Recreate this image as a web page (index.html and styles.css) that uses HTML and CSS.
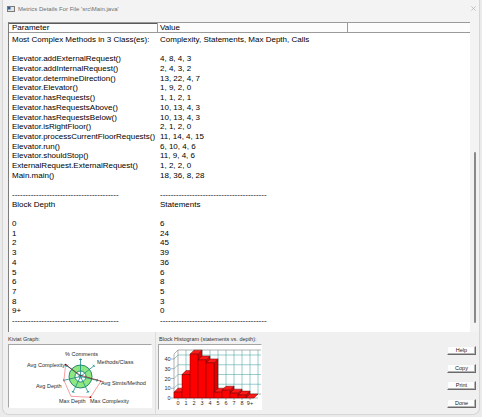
FILE: index.html
```html
<!DOCTYPE html>
<html>
<head>
<meta charset="utf-8">
<title>Metrics Details</title>
<link rel="stylesheet" href="styles.css">
</head>
<body>
<div class="window">
  <div class="titlebar">
    <svg class="app-icon" width="8" height="6" viewBox="0 0 8 6"><rect x="0.5" y="0.5" width="7" height="5" fill="#e4e4e4" stroke="#7a7a7a"/><rect x="1" y="1" width="2.5" height="2.5" fill="#2f5f9a"/></svg>
    <span class="title">Metrics Details For File 'src\Main.java'</span>
    <svg class="close" width="5" height="5" viewBox="0 0 5 5"><path d="M0.3 0.3 L4.7 4.7 M4.7 0.3 L0.3 4.7" stroke="#a8a8a8" stroke-width="0.6"/></svg>
  </div>
  <div class="list">
    <div class="table">
      <div class="thead">
        <div class="th c1">Parameter</div>
        <div class="th c2">Value</div>
        <div class="th c3"></div>
      </div>
      <div class="rows">
        <div class="row"><span>Most Complex Methods in 3 Class(es):</span><span>Complexity, Statements, Max Depth, Calls</span></div>
        <div class="row"></div>
        <div class="row"><span>Elevator.addExternalRequest()</span><span>4, 8, 4, 3</span></div>
        <div class="row"><span>Elevator.addInternalRequest()</span><span>2, 4, 3, 2</span></div>
        <div class="row"><span>Elevator.determineDirection()</span><span>13, 22, 4, 7</span></div>
        <div class="row"><span>Elevator.Elevator()</span><span>1, 9, 2, 0</span></div>
        <div class="row"><span>Elevator.hasRequests()</span><span>1, 1, 2, 1</span></div>
        <div class="row"><span>Elevator.hasRequestsAbove()</span><span>10, 13, 4, 3</span></div>
        <div class="row"><span>Elevator.hasRequestsBelow()</span><span>10, 13, 4, 3</span></div>
        <div class="row"><span>Elevator.isRightFloor()</span><span>2, 1, 2, 0</span></div>
        <div class="row"><span>Elevator.processCurrentFloorRequests()</span><span>11, 14, 4, 15</span></div>
        <div class="row"><span>Elevator.run()</span><span>6, 10, 4, 6</span></div>
        <div class="row"><span>Elevator.shouldStop()</span><span>11, 9, 4, 6</span></div>
        <div class="row"><span>ExternalRequest.ExternalRequest()</span><span>1, 2, 2, 0</span></div>
        <div class="row"><span>Main.main()</span><span>18, 36, 8, 28</span></div>
        <div class="row"></div>
        <div class="row"><span>----------------------------------------</span><span>----------------------------------------</span></div>
        <div class="row"><span>Block Depth</span><span>Statements</span></div>
        <div class="row"></div>
        <div class="row"><span>0</span><span>6</span></div>
        <div class="row"><span>1</span><span>24</span></div>
        <div class="row"><span>2</span><span>45</span></div>
        <div class="row"><span>3</span><span>39</span></div>
        <div class="row"><span>4</span><span>36</span></div>
        <div class="row"><span>5</span><span>6</span></div>
        <div class="row"><span>6</span><span>8</span></div>
        <div class="row"><span>7</span><span>5</span></div>
        <div class="row"><span>8</span><span>3</span></div>
        <div class="row"><span>9+</span><span>0</span></div>
        <div class="row"><span>----------------------------------------</span><span>----------------------------------------</span></div>
      </div>
    </div>
    <div class="vscroll"><div class="thumb"></div></div>
  </div>
  <div class="bottom">
    <div class="panel kiviat">
      <div class="cap">Kiviat Graph:</div>
      <div class="graph-box kiviat-box">
        <svg width="142" height="62" viewBox="1 1 142 62">
          <circle cx="72.5" cy="32.5" r="11.5" fill="#8ee882" stroke="#0b6a6a" stroke-width="0.8"/>
          <circle cx="72.5" cy="32.5" r="5.5" fill="#ffffff" stroke="#0b6a6a" stroke-width="0.8"/>
          <circle cx="72.5" cy="32.5" r="1.6" fill="#ffffff" stroke="#0b6a6a" stroke-width="0.6"/>
          <g stroke="#138c8c" stroke-width="0.8">
            <line x1="72.5" y1="32.5" x2="72.5" y2="14.5"/>
            <line x1="72.5" y1="32.5" x2="86.57" y2="21.28"/>
            <line x1="72.5" y1="32.5" x2="90.05" y2="36.5"/>
            <line x1="72.5" y1="32.5" x2="80.31" y2="48.72"/>
            <line x1="72.5" y1="32.5" x2="64.69" y2="48.72"/>
            <line x1="72.5" y1="32.5" x2="54.95" y2="36.5"/>
            <line x1="72.5" y1="32.5" x2="58.43" y2="21.28"/>
            <line x1="71" y1="15.5" x2="74" y2="15.5"/>
            <line x1="84.85" y1="20.73" x2="86.73" y2="23.07"/>
            <line x1="89.4" y1="34.82" x2="88.74" y2="37.74"/>
            <line x1="81.23" y1="47.17" x2="78.53" y2="48.47"/>
            <line x1="66.47" y1="48.47" x2="63.77" y2="47.17"/>
            <line x1="56.26" y1="37.74" x2="55.6" y2="34.82"/>
            <line x1="58.27" y1="23.07" x2="60.15" y2="20.73"/>
          </g>
          <polyline points="57.65,20.65 55.93,36.28 62.95,52.32 82.48,53.22 92.97,37.17" fill="none" stroke="#f07878" stroke-width="0.7"/>
          <polyline points="92.97,37.17 73.67,31.56 72.5,31.5 57.65,20.65" fill="none" stroke="#7a1212" stroke-width="0.7"/>
          <g fill="#8a0000">
            <circle cx="57.65" cy="20.65" r="0.9"/>
            <circle cx="82.48" cy="53.22" r="0.9"/>
            <circle cx="92.97" cy="37.17" r="0.7"/>
          </g>
          <g class="klabel">
            <text x="57" y="12">% Comments</text>
            <text x="89" y="20">Methods/Class</text>
            <text x="19" y="23">Avg Complexity</text>
            <text x="93" y="41">Avg Stmts/Method</text>
            <text x="28" y="44">Avg Depth</text>
            <text x="51" y="58.7">Max Depth</text>
            <text x="82" y="59">Max Complexity</text>
          </g>
        </svg>
      </div>
    </div>
    <div class="panel hist">
      <div class="cap">Block Histogram (statements vs. depth):</div>
      <div class="graph-box hist-box">
        <svg width="102" height="64" viewBox="1 1 102 64">
          <g stroke="#56a9a9" stroke-width="0.6" fill="none">
            <line x1="20" y1="40.25" x2="104" y2="40.25"/>
            <line x1="20" y1="30.5" x2="104" y2="30.5"/>
            <line x1="20" y1="20.75" x2="104" y2="20.75"/>
            <line x1="20" y1="11" x2="104" y2="11"/>
            <line x1="28" y1="6" x2="28" y2="50"/>
            <line x1="36" y1="6" x2="36" y2="50"/>
            <line x1="44" y1="6" x2="44" y2="50"/>
            <line x1="52" y1="6" x2="52" y2="50"/>
            <line x1="60" y1="6" x2="60" y2="50"/>
            <line x1="68" y1="6" x2="68" y2="50"/>
            <line x1="76" y1="6" x2="76" y2="50"/>
            <line x1="84" y1="6" x2="84" y2="50"/>
            <line x1="92" y1="6" x2="92" y2="50"/>
            <line x1="100" y1="6" x2="100" y2="50"/>
            <line x1="16" y1="44.25" x2="20" y2="40.25"/>
            <line x1="16" y1="34.5" x2="20" y2="30.5"/>
            <line x1="16" y1="24.75" x2="20" y2="20.75"/>
            <line x1="16" y1="15" x2="20" y2="11"/>
          </g>
          <g stroke="#7d7d7d" stroke-width="0.6" fill="none">
            <line x1="20" y1="6" x2="104" y2="6"/>
            <line x1="20" y1="6" x2="20" y2="50"/>
            <line x1="16" y1="10" x2="16" y2="54"/>
            <line x1="16" y1="10" x2="20" y2="6"/>
            <line x1="16" y1="54" x2="20" y2="50"/>
            <line x1="20" y1="50" x2="104" y2="50"/>
            <line x1="16" y1="54" x2="100" y2="54"/>
            <line x1="13" y1="54" x2="16" y2="54"/>
            <line x1="13" y1="44.25" x2="16" y2="44.25"/>
            <line x1="13" y1="34.5" x2="16" y2="34.5"/>
            <line x1="13" y1="24.75" x2="16" y2="24.75"/>
            <line x1="13" y1="15" x2="16" y2="15"/>
            <line x1="20" y1="54" x2="20" y2="56"/>
            <line x1="28" y1="54" x2="28" y2="56"/>
            <line x1="36" y1="54" x2="36" y2="56"/>
            <line x1="44" y1="54" x2="44" y2="56"/>
            <line x1="52" y1="54" x2="52" y2="56"/>
            <line x1="60" y1="54" x2="60" y2="56"/>
            <line x1="68" y1="54" x2="68" y2="56"/>
            <line x1="76" y1="54" x2="76" y2="56"/>
            <line x1="84" y1="54" x2="84" y2="56"/>
            <line x1="92" y1="54" x2="92" y2="56"/>
          </g>
          <g class="bars" stroke="#6a0000" stroke-width="0.5" stroke-linejoin="round">
            <polygon class="side" points="24,48.15 28,44.15 28,50 24,54"/>
            <polygon class="top" points="16,48.15 20,44.15 28,44.15 24,48.15"/>
            <rect class="front" x="16" y="48.15" width="8" height="5.85"/>
            <polygon class="side" points="32,30.6 36,26.6 36,50 32,54"/>
            <polygon class="top" points="24,30.6 28,26.6 36,26.6 32,30.6"/>
            <rect class="front" x="24" y="30.6" width="8" height="23.4"/>
            <polygon class="side" points="40,10.13 44,6.13 44,50 40,54"/>
            <polygon class="top" points="32,10.13 36,6.13 44,6.13 40,10.13"/>
            <rect class="front" x="32" y="10.13" width="8" height="43.87"/>
            <polygon class="side" points="48,15.98 52,11.98 52,50 48,54"/>
            <polygon class="top" points="40,15.98 44,11.98 52,11.98 48,15.98"/>
            <rect class="front" x="40" y="15.98" width="8" height="38.02"/>
            <polygon class="side" points="56,18.9 60,14.9 60,50 56,54"/>
            <polygon class="top" points="48,18.9 52,14.9 60,14.9 56,18.9"/>
            <rect class="front" x="48" y="18.9" width="8" height="35.1"/>
            <polygon class="side" points="64,48.15 68,44.15 68,50 64,54"/>
            <polygon class="top" points="56,48.15 60,44.15 68,44.15 64,48.15"/>
            <rect class="front" x="56" y="48.15" width="8" height="5.85"/>
            <polygon class="side" points="72,46.2 76,42.2 76,50 72,54"/>
            <polygon class="top" points="64,46.2 68,42.2 76,42.2 72,46.2"/>
            <rect class="front" x="64" y="46.2" width="8" height="7.8"/>
            <polygon class="side" points="80,49.13 84,45.13 84,50 80,54"/>
            <polygon class="top" points="72,49.13 76,45.13 84,45.13 80,49.13"/>
            <rect class="front" x="72" y="49.13" width="8" height="4.87"/>
            <polygon class="side" points="88,51.08 92,47.08 92,50 88,54"/>
            <polygon class="top" points="80,51.08 84,47.08 92,47.08 88,51.08"/>
            <rect class="front" x="80" y="51.08" width="8" height="2.92"/>
            <polygon class="top" points="88,54 92,50 100,50 96,54"/>
          </g>
          <g class="axlabel ylab">
            <text x="12.5" y="56">0</text>
            <text x="12.5" y="46.25">10</text>
            <text x="12.5" y="36.5">20</text>
            <text x="12.5" y="26.75">30</text>
            <text x="12.5" y="17">40</text>
          </g>
          <g class="axlabel xlab">
            <text x="20" y="61">0</text>
            <text x="28" y="61">1</text>
            <text x="36" y="61">2</text>
            <text x="44" y="61">3</text>
            <text x="52" y="61">4</text>
            <text x="60" y="61">5</text>
            <text x="68" y="61">6</text>
            <text x="76" y="61">7</text>
            <text x="84" y="61">8</text>
            <text x="92" y="61">9+</text>
          </g>
        </svg>
      </div>
    </div>
    <div class="buttons">
      <div class="btn">Help</div>
      <div class="btn">Copy</div>
      <div class="btn">Print</div>
      <div class="btn">Done</div>
    </div>
  </div>
</div>
</body>
</html>
```
FILE: styles.css
```css
* { box-sizing: border-box; }
html, body { margin: 0; padding: 0; }
body {
  width: 482px;
  height: 417px;
  overflow: hidden;
  background: #ebebeb;
  font-family: "Liberation Sans", Arial, sans-serif;
  color: #000;
}
.window {
  margin-left: 2px;
  width: 478px;
  height: 415px;
  background: #f0f0f0;
  border: 1px solid #d6d6d6;
  border-top: none;
  border-radius: 0 0 7px 7px;
  display: flex;
  flex-direction: column;
}
.titlebar {
  height: 22px;
  flex: none;
  display: flex;
  align-items: flex-start;
  padding: 5px 0 0 4px;
  background: #f3f3f3;
}
.app-icon { display: block; margin-top: 1px; }
.title {
  margin-left: 3px;
  font-size: 6px;
  line-height: 8px;
  color: #6f6f6f;
  white-space: nowrap;
}
.close { display: block; margin-left: auto; margin-right: 3px; margin-top: 1px; }

.list {
  height: 310px;
  flex: none;
  margin-left: 5px;
  display: flex;
}
.table {
  flex: 1;
  background: #fff;
  border-left: 1px solid #7c7c7c;
  display: flex;
  flex-direction: column;
  overflow: hidden;
}
.thead {
  display: flex;
  height: 11px;
  flex: none;
  border-top: 1px solid #9a9a9a;
  border-bottom: 1px solid #9a9a9a;
  font-size: 8px;
  line-height: 9px;
  background: #fcfcfc;
}
.th { border-right: 1px solid #9a9a9a; white-space: nowrap; }
.th.c1 { width: 149px; padding-left: 3px; box-shadow: inset 0 1px 0 #5a5a5a; }
.th.c2 { width: 190px; padding-left: 2px; }
.th.c3 { flex: 1; border-right: none; }
.rows {
  padding: 2px 0 0 3px;
  font-size: 8px;
  line-height: 9.7px;
}
.row {
  display: grid;
  grid-template-columns: 148px 1fr;
  height: 9.7px;
  white-space: nowrap;
}
.vscroll {
  width: 9px;
  flex: none;
  background: #f3f3f3;
  padding: 130px 0 0 4px;
}
.thumb {
  width: 2px;
  height: 171px;
  background: #8a8a8a;
  border-radius: 1px;
}

.bottom {
  flex: 1;
  display: flex;
}
.panel {
  display: flex;
  flex-direction: column;
  padding-top: 4px;
}
.cap {
  font-size: 5.5px;
  line-height: 7px;
  height: 7px;
  color: #333;
  white-space: nowrap;
}
.graph-box {
  margin-top: 1px;
  background: #fff;
  border: 1px solid;
  border-color: #a5a5a5 #ffffff #ffffff #a5a5a5;
}
.graph-box svg { display: block; }
.kiviat {
  width: 153px;
  padding-left: 5px;
  border-right: 1px solid #dcdcdc;
}
.kiviat-box { width: 144px; height: 64px; }
.hist { padding-left: 2px; }
.hist .cap { padding-left: 1px; }
.hist-box { width: 104px; height: 66px; }

.klabel text, .axlabel text {
  font-family: "Liberation Sans", Arial, sans-serif;
  font-size: 5.5px;
  fill: #2a2a2a;
}
.ylab text { text-anchor: end; }
.xlab text { text-anchor: middle; }
.bars .front { fill: #ff0000; }
.bars .top { fill: #ff1a1a; }
.bars .side { fill: #e00000; }

.buttons {
  margin-left: auto;
  margin-right: 3px;
  padding-top: 14px;
  display: flex;
  flex-direction: column;
  gap: 8.7px;
}
.btn {
  width: 29px;
  height: 9px;
  background: #fdfdfd;
  border: 1px solid;
  border-color: #efefef #6a6a6a #6a6a6a #efefef;
  box-shadow: inset -1px -1px 0 #b4b4b4;
  font-size: 5.5px;
  line-height: 7px;
  text-align: center;
  color: #222;
}
```
